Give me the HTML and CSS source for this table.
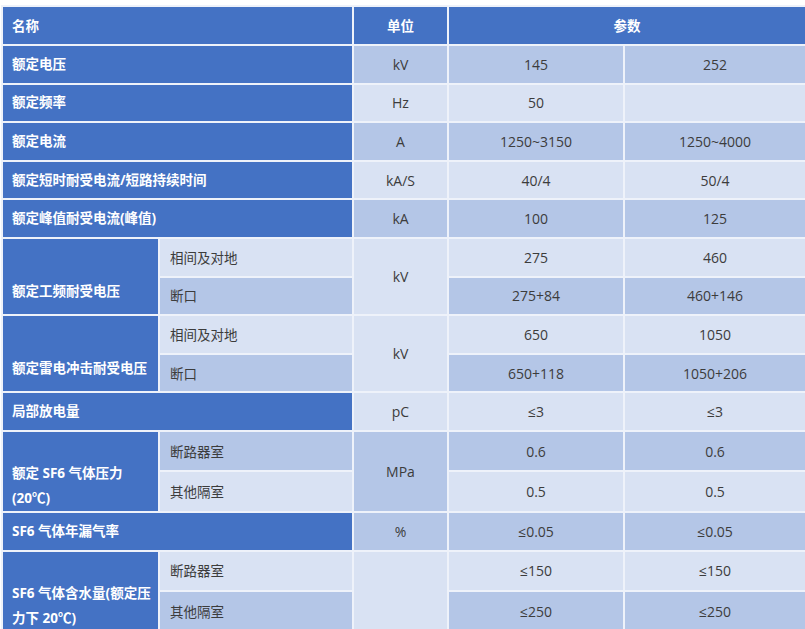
FILE: index.html
```html
<!DOCTYPE html>
<html lang="zh">
<head>
<meta charset="utf-8">
<title>参数表</title>
<link rel="stylesheet" href="styles.css">
</head>
<body>
<table class="spec">
  <colgroup>
    <col class="c-name">
    <col class="c-sub">
    <col class="c-unit">
    <col class="c-v1">
    <col class="c-v2">
  </colgroup>
  <thead>
    <tr>
      <th colspan="2" class="hl">名称</th>
      <th>单位</th>
      <th colspan="2">参数</th>
    </tr>
  </thead>
  <tbody>
    <tr class="dk">
      <td colspan="2" class="name">额定电压</td>
      <td>kV</td><td>145</td><td>252</td>
    </tr>
    <tr class="lt">
      <td colspan="2" class="name">额定频率</td>
      <td>Hz</td><td>50</td><td></td>
    </tr>
    <tr class="dk">
      <td colspan="2" class="name">额定电流</td>
      <td>A</td><td>1250~3150</td><td>1250~4000</td>
    </tr>
    <tr class="lt">
      <td colspan="2" class="name">额定短时耐受电流/短路持续时间</td>
      <td>kA/S</td><td>40/4</td><td>50/4</td>
    </tr>
    <tr class="dk">
      <td colspan="2" class="name">额定峰值耐受电流(峰值)</td>
      <td>kA</td><td>100</td><td>125</td>
    </tr>
    <tr class="lt">
      <td rowspan="2" class="name group">额定工频耐受电压</td>
      <td class="sub">相间及对地</td>
      <td rowspan="2">kV</td><td>275</td><td>460</td>
    </tr>
    <tr class="dk">
      <td class="sub">断口</td>
      <td>275+84</td><td>460+146</td>
    </tr>
    <tr class="lt">
      <td rowspan="2" class="name group">额定雷电冲击耐受电压</td>
      <td class="sub">相间及对地</td>
      <td rowspan="2">kV</td><td>650</td><td>1050</td>
    </tr>
    <tr class="dk">
      <td class="sub">断口</td>
      <td>650+118</td><td>1050+206</td>
    </tr>
    <tr class="lt">
      <td colspan="2" class="name">局部放电量</td>
      <td>pC</td><td>≤3</td><td>≤3</td>
    </tr>
    <tr class="dk">
      <td rowspan="2" class="name group">额定 SF6 气体压力<br>(20℃)</td>
      <td class="sub">断路器室</td>
      <td rowspan="2">MPa</td><td>0.6</td><td>0.6</td>
    </tr>
    <tr class="lt">
      <td class="sub">其他隔室</td>
      <td>0.5</td><td>0.5</td>
    </tr>
    <tr class="dk">
      <td colspan="2" class="name">SF6 气体年漏气率</td>
      <td>%</td><td>≤0.05</td><td>≤0.05</td>
    </tr>
    <tr class="lt">
      <td rowspan="2" class="name group">SF6 气体含水量(额定压<br>力下 20℃)</td>
      <td class="sub">断路器室</td>
      <td rowspan="2"></td><td>≤150</td><td>≤150</td>
    </tr>
    <tr class="dk">
      <td class="sub">其他隔室</td>
      <td>≤250</td><td>≤250</td>
    </tr>
  </tbody>
</table>
</body>
</html>
```

FILE: styles.css
```css
html, body {
  margin: 0;
  padding: 0;
  background: #ffffff;
}

body {
  padding: 5px 0 0 1px;
  font-family: "Open Sans", "Noto Sans CJK SC", sans-serif;
  font-size: 14px;
  color: #3c3c3c;
}

.spec {
  width: 804px;
  border-collapse: collapse;
  table-layout: fixed;
  border-top: 1px solid #dcdfe6;
}

.c-name { width: 157px; }
.c-sub { width: 194px; }
.c-unit { width: 95px; }
.c-v1 { width: 176px; }
.c-v2 { width: 182px; }

.spec th,
.spec td {
  border: 2px solid #eef2fa;
  padding: 0 6px;
  text-align: center;
  vertical-align: middle;
  line-height: 25px;
  white-space: nowrap;
}

.spec thead tr {
  height: 39px;
}

.spec tbody tr {
  height: 38.6px;
}

.spec th {
  background: #4472c4;
  color: #ffffff;
  font-weight: 700;
  font-size: 13.5px;
  font-family: "Noto Sans CJK SC", sans-serif;
}

.spec th.hl {
  text-align: left;
  padding-left: 9px;
}

.dk td {
  background: #b4c6e7;
}

.lt td {
  background: #d9e2f3;
}

.spec td.name {
  background: #4472c4;
  color: #ffffff;
  font-weight: 700;
  font-size: 13.5px;
  text-align: left;
  padding-left: 9px;
  font-family: "Open Sans", "Noto Sans CJK SC", sans-serif;
}

.spec td.group {
  padding-top: 29px;
}

.spec td.sub {
  text-align: left;
  padding-left: 10px;
  font-size: 13.5px;
  font-family: "Noto Sans CJK SC", sans-serif;
}
```
